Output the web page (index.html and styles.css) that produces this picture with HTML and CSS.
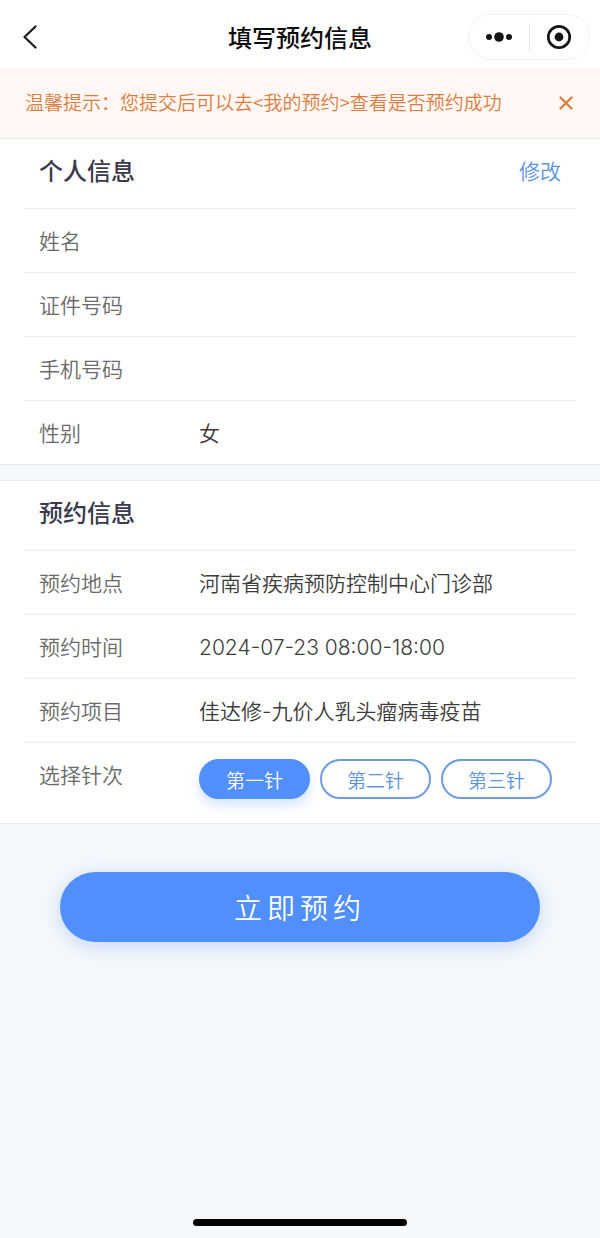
FILE: index.html
```html
<!DOCTYPE html>
<html lang="zh-CN">

<head>
    <meta charset="UTF-8">
    <meta name="viewport" content="width=device-width, initial-scale=1">
    <title>填写预约信息</title>
    <link rel="stylesheet" href="styles.css">
</head>

<body>
    <header class="navbar">
        <button class="back" type="button" aria-label="返回">
            <svg width="16" height="26" viewBox="0 0 16 26" fill="none" stroke="#1c1c1c" stroke-width="2.3" stroke-linecap="round" stroke-linejoin="round">
                <path d="M13.5 2.5L2.5 13l11 10.5" />
            </svg>
        </button>
        <h1 class="title">填写预约信息</h1>
        <div class="capsule">
            <button type="button" aria-label="更多">
                <svg width="28" height="12" viewBox="0 0 28 12" fill="#151515">
                    <circle cx="4" cy="6" r="3" />
                    <circle cx="14" cy="6" r="4.8" />
                    <circle cx="24" cy="6" r="3" />
                </svg>
            </button>
            <button type="button" aria-label="关闭小程序">
                <svg width="26" height="26" viewBox="0 0 26 26">
                    <circle cx="13" cy="13" r="10.7" fill="none" stroke="#151515" stroke-width="2.7" />
                    <circle cx="13" cy="13" r="4.4" fill="#151515" />
                </svg>
            </button>
        </div>
    </header>

    <div class="notice">
        <span>温馨提示：您提交后可以去&lt;我的预约&gt;查看是否预约成功</span>
        <button class="notice-close" type="button" aria-label="关闭提示">
            <svg width="14" height="14" viewBox="0 0 14 14" fill="none" stroke="#dd7c3e" stroke-width="2.2" stroke-linecap="round">
                <path d="M1.5 1.5l11 11M12.5 1.5l-11 11" />
            </svg>
        </button>
    </div>

    <main>
        <section class="panel">
            <div class="panel-head">
                <h2>个人信息</h2>
                <a href="#">修改</a>
            </div>
            <div class="row"><span class="label">姓名</span></div>
            <div class="row"><span class="label">证件号码</span></div>
            <div class="row"><span class="label">手机号码</span></div>
            <div class="row"><span class="label">性别</span><span class="value">女</span></div>
        </section>

        <section class="panel">
            <div class="panel-head">
                <h2>预约信息</h2>
            </div>
            <div class="row"><span class="label">预约地点</span><span class="value">河南省疾病预防控制中心门诊部</span></div>
            <div class="row"><span class="label">预约时间</span><span class="value">2024-07-23 08:00-18:00</span></div>
            <div class="row"><span class="label">预约项目</span><span class="value">佳达修-九价人乳头瘤病毒疫苗</span></div>
            <div class="row row-dose">
                <span class="label" id="doseLabel">选择针次</span>
                <div class="doses" role="group" aria-labelledby="doseLabel">
                    <button class="dose active" type="button" aria-pressed="true">第一针</button>
                    <button class="dose" type="button" aria-pressed="false">第二针</button>
                    <button class="dose" type="button" aria-pressed="false">第三针</button>
                </div>
            </div>
        </section>

        <button class="submit" type="button">立即预约</button>
    </main>

    <div class="home-bar"></div>

    <script>
        const doses = document.querySelectorAll(".dose");

        // Only one dose can be selected at a time
        doses.forEach(function (dose) {
            dose.addEventListener("click", function () {
                doses.forEach(function (item) {
                    item.classList.toggle("active", item === dose);
                    item.setAttribute("aria-pressed", item === dose);
                });
            });
        });

        document.querySelector(".notice-close").addEventListener("click", function () {
            document.querySelector(".notice").style.display = "none";
        });
    </script>
</body>

</html>
```
FILE: styles.css
```css
* {
    box-sizing: border-box;
}

body {
    display: flex;
    flex-direction: column;
    min-height: 100vh;
    margin: 0;
    background-color: #f5f9fc;
    color: #3c3c3c;
    font-family: "Noto Sans CJK SC", sans-serif;
    font-size: 21px;
    font-weight: 350;
    line-height: 30px;
}

button {
    padding: 0;
    border: none;
    background: none;
    font-family: inherit;
    font-weight: inherit;
    cursor: pointer;
}

svg {
    display: block;
}

/* top bar */
.navbar {
    display: grid;
    grid-template-columns: 1fr auto 1fr;
    align-items: center;
    height: 68px;
    padding: 6px 10px 0;
    background-color: #fff;
}

.back {
    justify-self: start;
    padding: 0 12px;
}

.title {
    margin: 0;
    color: #0c0c0c;
    font-size: 24px;
    font-weight: 500;
    line-height: 36px;
}

.capsule {
    display: flex;
    justify-self: end;
    width: 122px;
    height: 46px;
    border: 1px solid #f3f3f3;
    border-radius: 23px;
}

.capsule button {
    display: flex;
    flex: 1;
    align-items: center;
    justify-content: center;
    position: relative;
}

.capsule button + button::before {
    content: "";
    position: absolute;
    top: 8px;
    bottom: 8px;
    left: 0;
    width: 1px;
    background-color: #e4e4e4;
}

.notice {
    display: flex;
    align-items: flex-start;
    justify-content: space-between;
    min-height: 70px;
    padding: 19px 27px 19px 25px;
    background-color: #fff7f4;
    color: #dd7c3e;
    font-size: 19px;
}

.notice-close {
    padding: 9px 0;
}

/* info panels */
.panel {
    margin-bottom: 15px;
    padding: 0 24px;
    border-top: 1px solid #e8ebed;
    border-bottom: 1px solid #e8ebed;
    background-color: #fff;
}

.panel-head {
    display: flex;
    justify-content: space-between;
    height: 69px;
    padding: 16px 15px 0;
}

.panel-head h2 {
    margin: 0;
    color: #3a3a4c;
    font-size: 24px;
    font-weight: 500;
    line-height: 30px;
}

.panel-head a {
    color: #5b93e6;
    text-decoration: none;
}

.row {
    display: flex;
    min-height: 64px;
    padding: 18px 15px 15px;
    border-top: 1px solid #ededed;
    font-family: Inter, "Noto Sans CJK SC", sans-serif;
}

.label {
    flex: 0 0 160px;
    color: #6a6a6a;
}

.row-dose {
    min-height: 81px;
    padding: 16px 15px;
}

.row-dose .label {
    line-height: 34px;
}

.doses {
    display: flex;
    gap: 10px;
}

.dose {
    width: 111px;
    height: 40px;
    border: 2px solid #6d9ddd;
    border-radius: 20px;
    color: #5b93dd;
    font-size: 19px;
}

.dose.active {
    border-color: #508ffc;
    background-color: #508ffc;
    box-shadow: 0 6px 12px rgba(80, 143, 252, 0.25);
    color: #fff;
}

.submit {
    display: block;
    width: 80%;
    height: 70px;
    margin: 48px auto 40px;
    border-radius: 35px;
    background-color: #508ffc;
    box-shadow: 0 4px 20px rgba(80, 130, 230, 0.3);
    color: #fff;
    font-size: 28px;
    letter-spacing: 5px;
}

.home-bar {
    width: 214px;
    height: 7px;
    margin: auto auto 12px;
    border-radius: 4px;
    background-color: #000;
}
```
